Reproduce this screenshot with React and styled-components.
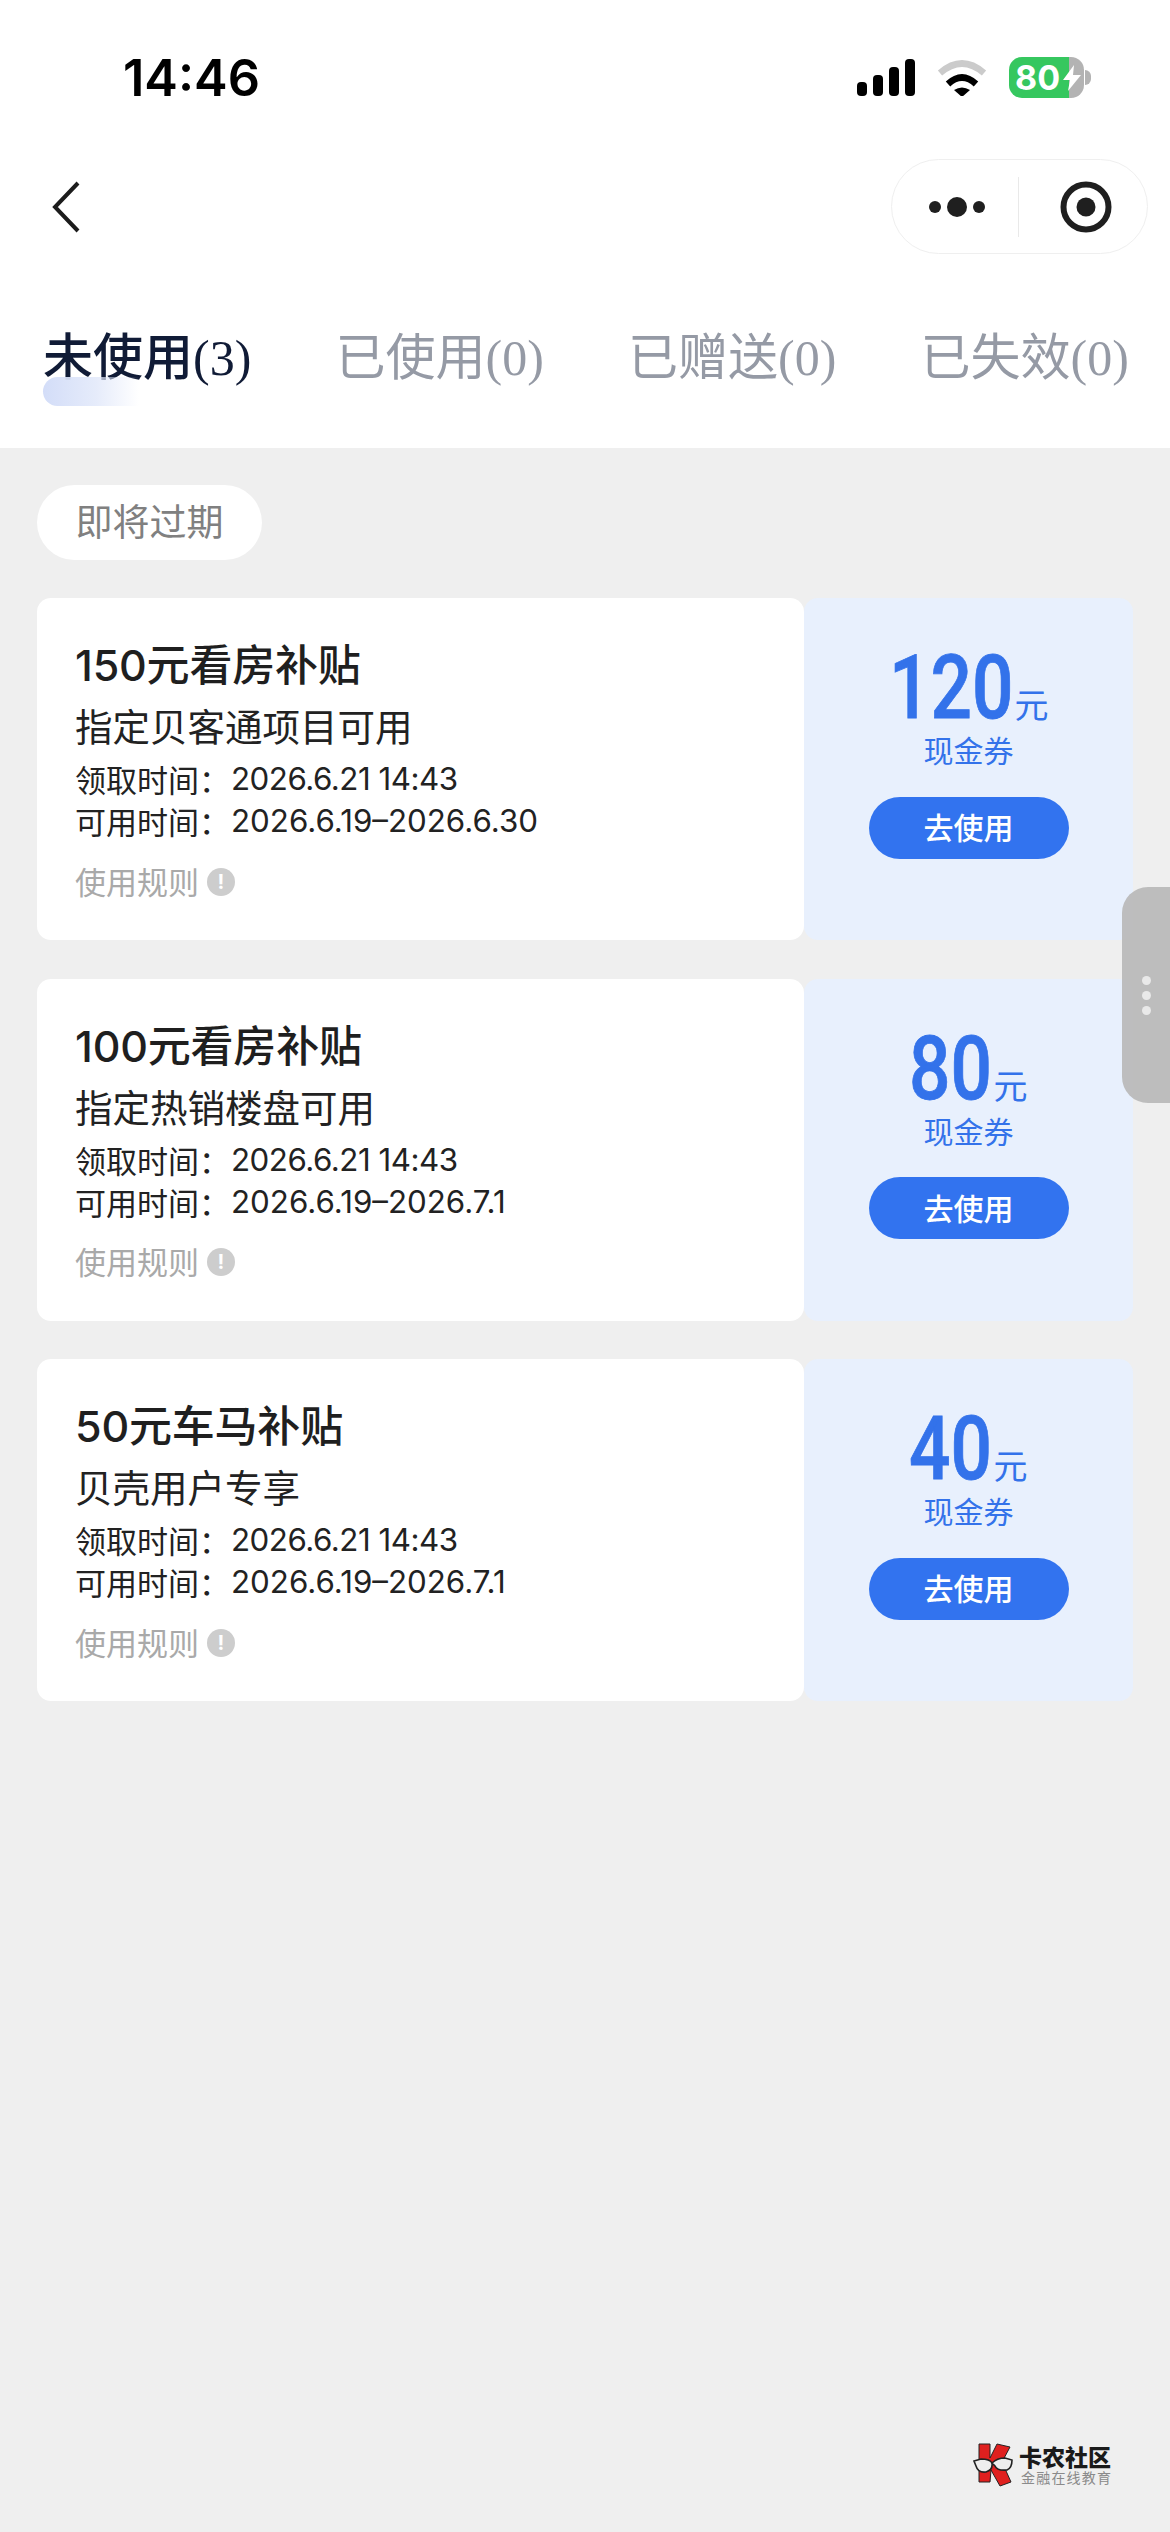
import React from "react";
import styled, { createGlobalStyle } from "styled-components";

const CJK = '"Noto Sans CJK SC", sans-serif';
const UI = `Inter, ${CJK}`;

const Global = createGlobalStyle`
  html, body { margin: 0; padding: 0; background: #efefef; }
  * { box-sizing: border-box; }
`;

const Page = styled.div`
  position: relative;
  width: 1170px;
  height: 2532px;
  overflow: hidden;
  background: #efefef;
  font-family: ${UI};
`;
const Header = styled.header`
  height: 448px;
  background: #fff;
`;
const StatusBar = styled.div`
  height: 159px;
  padding: 57px 86px 61px 123px;
  display: flex;
  align-items: center;
  justify-content: space-between;
`;
const Time = styled.div`
  font: 600 50.5px/41px Inter, sans-serif;
  color: #000;
`;
const StatusIcons = styled.div`
  display: flex;
  align-items: center;
  gap: 22px;
`;
const Battery = styled.div`
  position: relative;
  width: 75px;
  height: 41px;
  border-radius: 13px;
  background: linear-gradient(90deg, #36c75f 0 80%, #b3b3b3 80% 100%);
  color: #fff;
  font: 700 34px/41px Inter, sans-serif;
  padding-left: 6px;
  letter-spacing: 0;
`;
const BatteryNub = styled.span`
  position: absolute;
  right: -7px;
  top: 13px;
  width: 6px;
  height: 15px;
  border-radius: 0 8px 8px 0;
  background: #b3b3b3;
`;
const Bolt = styled.svg`
  position: absolute;
  left: 53px;
  top: 8px;
`;
const NavBar = styled.div`
  height: 95px;
  padding: 0 22px 0 52px;
  display: flex;
  align-items: center;
  justify-content: space-between;
`;
const Capsule = styled.div`
  width: 257px;
  height: 95px;
  padding-left: 3px;
  border: 1.5px solid #efefef;
  border-radius: 48px;
  display: flex;
  align-items: center;
`;
const CapsuleCell = styled.div`
  flex: 1;
  height: 60px;
  display: flex;
  align-items: center;
  justify-content: center;
  padding-left: ${(p) => (p.$divided ? "5px" : "0")};
  border-left: ${(p) => (p.$divided ? "1.5px solid #e9e9e9" : "none")};
`;
const Tabs = styled.nav`
  display: flex;
  gap: 87.5px;
  padding: 73px 0 0 43px;
`;
const Tab = styled.div`
  position: relative;
  width: 205px;
  white-space: nowrap;
  font-family: "Liberation Serif", ${CJK};
  font-size: 50px;
  line-height: 62px;
  font-weight: 400;
  color: ${(p) => (p.$active ? "#101b36" : "#959aa5")};
`;
const TabName = styled.span`
  font-weight: ${(p) => (p.$active ? 500 : 400)};
`;
const TabMark = styled.span`
  position: absolute;
  left: 0;
  top: 50px;
  width: 96px;
  height: 29px;
  border-radius: 15px 0 0 15px;
  background: linear-gradient(90deg, #d3ddf8 0%, rgba(225, 232, 250, 0.85) 55%, rgba(255, 255, 255, 0) 100%);
`;
const Main = styled.main`
  padding: 37px 37px 0;
`;
const Chip = styled.div`
  width: 225px;
  height: 75px;
  border-radius: 38px;
  background: #fff;
  display: flex;
  align-items: center;
  justify-content: center;
  padding-bottom: 5px;
  font-family: ${CJK};
  font-size: 37px;
  color: #808080;
`;
const CardList = styled.div`
  margin-top: 38px;
  display: flex;
  flex-direction: column;
  gap: 38.5px;
`;
const Card = styled.article`
  display: flex;
  height: 342px;
`;
const CardBody = styled.div`
  width: 767px;
  padding: 37px 0 0 38px;
  background: #fff;
  border-radius: 14px;
`;
const Title = styled.div`
  height: 60px;
  font-family: ${UI};
  font-size: 43px;
  line-height: 60px;
  font-weight: 500;
  color: #1f1f1f;
  letter-spacing: -0.2px;
`;
const Sub = styled.div`
  height: 63px;
  font-family: ${CJK};
  font-size: 37.5px;
  line-height: 60px;
  color: #222;
`;
const DateRow = styled.div`
  height: 42px;
  display: flex;
  font-family: ${UI};
  font-size: 31.3px;
  line-height: 42px;
  letter-spacing: ${(p) => (p.$tight ? "-0.5px" : "0")};
  color: #222;
  white-space: nowrap;
`;
const DateLabel = styled.span`
  width: 156px;
  font-family: ${CJK};
  font-size: 31px;
  letter-spacing: 0;
`;
const Rule = styled.div`
  margin-top: 16px;
  height: 44px;
  display: flex;
  align-items: center;
  gap: 8px;
  font-family: ${CJK};
  font-size: 31px;
  color: #a9a9a9;
`;
const RuleIcon = styled.span`
  width: 28px;
  height: 28px;
  margin-top: 3px;
  border-radius: 50%;
  background: #cdcdcd;
  color: #fff;
  display: flex;
  align-items: center;
  justify-content: center;
  font: 700 20px/28px Inter, sans-serif;
`;
const Price = styled.aside`
  width: 329px;
  padding-top: 45px;
  background: #e8f0fd;
  border-radius: 14px;
  display: flex;
  flex-direction: column;
  align-items: center;
  color: #3372ea;
`;
const Amount = styled.div`
  height: 86px;
  display: flex;
  align-items: baseline;
  white-space: nowrap;
`;
const Digits = styled.span`
  display: inline-block;
  font: 500 89px/89px Roboto, sans-serif;
  -webkit-text-stroke: 0.8px #3372ea;
  transform: scaleX(0.82);
  transform-origin: left center;
  margin-right: ${(p) => -0.18 * 0.5615 * 89 * p.$count + 1}px;
`;
const Unit = styled.span`
  font-family: ${CJK};
  font-size: 34px;
  line-height: 34px;
`;
const Kind = styled.div`
  height: 40px;
  font-family: ${CJK};
  font-size: 30px;
  line-height: 40px;
`;
const UseButton = styled.button`
  margin-top: 27.5px;
  width: 200px;
  height: 62px;
  border: 0;
  border-radius: 31px;
  background: #3273ef;
  color: #fff;
  font-family: ${CJK};
  font-size: 30px;
  font-weight: 500;
  padding: 0 0 3px;
`;
const SideHandle = styled.div`
  position: absolute;
  left: 1122px;
  top: 887px;
  width: 48px;
  height: 216px;
  border-radius: 26px 0 0 26px;
  background: rgba(184, 184, 184, 0.92);
  display: flex;
  flex-direction: column;
  align-items: center;
  justify-content: center;
  gap: 6px;
`;
const HandleDot = styled.span`
  width: 9px;
  height: 9px;
  border-radius: 50%;
  background: #e9e9e9;
`;
const Watermark = styled.div`
  position: absolute;
  left: 973px;
  top: 2443px;
  display: flex;
  gap: 4px;
`;
const MarkText = styled.div`
  display: flex;
  flex-direction: column;
`;
const MarkName = styled.div`
  font-family: ${CJK};
  font-size: 23px;
  line-height: 26px;
  font-weight: 900;
  color: #1a1a1a;
  white-space: nowrap;
`;
const MarkTag = styled.div`
  font-family: ${CJK};
  font-size: 14px;
  line-height: 16px;
  letter-spacing: 1.2px;
  color: #8a8a8a;
  white-space: nowrap;
  margin-left: 2px;
`;

const cards = [
  { title: "150元看房补贴", sub: "指定贝客通项目可用", range: "2026.6.19–2026.6.30", amount: "120" },
  { title: "100元看房补贴", sub: "指定热销楼盘可用", range: "2026.6.19–2026.7.1", amount: "80" },
  { title: "50元车马补贴", sub: "贝壳用户专享", range: "2026.6.19–2026.7.1", amount: "40" },
];
const tabs = [
  { name: "未使用", count: 3, active: true },
  { name: "已使用", count: 0 },
  { name: "已赠送", count: 0 },
  { name: "已失效", count: 0 },
];

const Signal = () => (
  <svg width="58" height="37" viewBox="0 0 58 37">
    <rect x="0" y="23" width="10" height="14" rx="4" />
    <rect x="16" y="16" width="10" height="21" rx="4" />
    <rect x="32" y="8" width="10" height="29" rx="4" />
    <rect x="48" y="0" width="10" height="37" rx="4" />
  </svg>
);
const Wifi = () => (
  <svg width="50" height="37" viewBox="0 0 50 37">
    <path d="M3 14 Q25 -5 47 14" fill="none" stroke="#cbcbcb" strokeWidth="6.5" />
    <path d="M11 25 Q25 12 39 25" fill="none" stroke="#000" strokeWidth="6.5" />
    <path d="M17 31 Q25 26 33 31 L25 38 Z" fill="#000" />
  </svg>
);

const Logo = () => (
  <svg width="42" height="44" viewBox="0 0 42 44">
    <path d="M6 1 H17 V15 L24 1 L37 4 L29 19 L38 39 L27 43 L18 27 L17 39 H6 Z" fill="#e0201f" stroke="#222" strokeWidth="1" />
    <path d="M1 18 L8 16 Q17 16 19 20 Q20 27 13 29 Q5 30 3 23 Z" fill="#eee" stroke="#222" strokeWidth="1.6" />
    <path d="M19 20 Q24 15 32 15 L39 17 Q39 25 34 27 Q24 28 22 23 Z" fill="#eee" stroke="#222" strokeWidth="1.6" />
  </svg>
);

export default function App() {
  return (
    <Page>
      <Global />
      <Header>
        <StatusBar>
          <Time>14:46</Time>
          <StatusIcons>
            <Signal />
            <Wifi />
            <Battery>
              80
              <Bolt width="20" height="26" viewBox="0 0 20 26">
                <path d="M12 0 L1 15 H8 L6 26 L19 10 H11 Z" fill="#fff" />
              </Bolt>
              <BatteryNub />
            </Battery>
          </StatusIcons>
        </StatusBar>
        <NavBar>
          <svg width="28" height="52" viewBox="0 0 28 52">
            <path d="M26 2 L3 26 L26 50" fill="none" stroke="#1c1c1c" strokeWidth="4" />
          </svg>
          <Capsule>
            <CapsuleCell>
              <svg width="56" height="22" viewBox="0 0 56 22" fill="#1f1f1f">
                <circle cx="6" cy="11" r="6" />
                <circle cx="28" cy="11" r="10" />
                <circle cx="50" cy="11" r="6" />
              </svg>
            </CapsuleCell>
            <CapsuleCell $divided>
              <svg width="52" height="52" viewBox="0 0 52 52">
                <circle cx="26" cy="26" r="22.5" fill="none" stroke="#1f1f1f" strokeWidth="6" />
                <circle cx="26" cy="26" r="9.5" fill="#1f1f1f" />
              </svg>
            </CapsuleCell>
          </Capsule>
        </NavBar>
        <Tabs>
          {tabs.map((t) => (
            <Tab key={t.name} $active={t.active}>
              <TabName $active={t.active}>{t.name}</TabName>({t.count})
              {t.active && <TabMark />}
            </Tab>
          ))}
        </Tabs>
      </Header>
      <Main>
        <Chip>即将过期</Chip>
        <CardList>
          {cards.map((c) => (
            <Card key={c.title}>
              <CardBody>
                <Title>{c.title}</Title>
                <Sub>{c.sub}</Sub>
                <DateRow $tight>
                  <DateLabel>领取时间：</DateLabel>2026.6.21 14:43
                </DateRow>
                <DateRow>
                  <DateLabel>可用时间：</DateLabel>{c.range}
                </DateRow>
                <Rule>
                  使用规则<RuleIcon>!</RuleIcon>
                </Rule>
              </CardBody>
              <Price>
                <Amount>
                  <Digits $count={c.amount.length}>{c.amount}</Digits>
                  <Unit>元</Unit>
                </Amount>
                <Kind>现金券</Kind>
                <UseButton>去使用</UseButton>
              </Price>
            </Card>
          ))}
        </CardList>
      </Main>
      <SideHandle>
        <HandleDot />
        <HandleDot />
        <HandleDot />
      </SideHandle>
      <Watermark>
        <Logo />
        <MarkText>
          <MarkName>卡农社区</MarkName>
          <MarkTag>金融在线教育</MarkTag>
        </MarkText>
      </Watermark>
    </Page>
  );
}
